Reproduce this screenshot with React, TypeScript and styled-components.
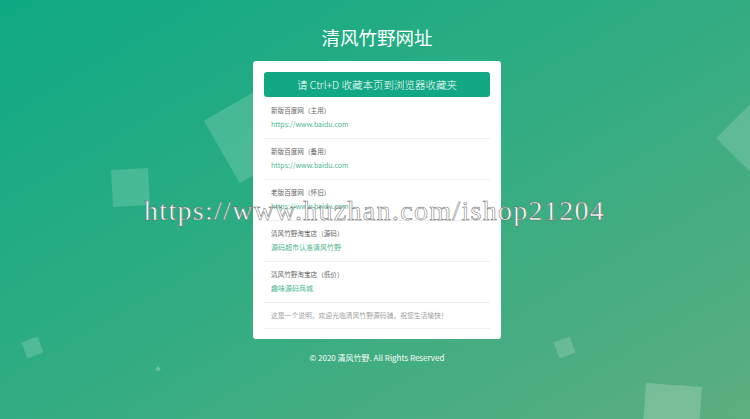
import React from "react";
import styled, { createGlobalStyle } from "styled-components";

const Global = createGlobalStyle`
  html, body { margin: 0; padding: 0; }
  body {
    width: 750px;
    height: 419px;
    overflow: hidden;
    font-family: "Noto Sans CJK SC", "Noto Sans", sans-serif;
  }
`;

const Page = styled.div`
  position: relative;
  width: 750px;
  height: 419px;
  overflow: hidden;
  background: linear-gradient(150deg, #0ea982 0%, #2aac83 40%, #5cae7f 100%);
  display: flex;
  flex-direction: column;
  align-items: center;
  padding: 24px 0 0 4px;
  box-sizing: border-box;
`;

const Square = styled.div<{ $x: number; $y: number; $s: number; $r: number; $o?: number }>`
  position: absolute;
  left: ${(p) => p.$x - p.$s / 2}px;
  top: ${(p) => p.$y - p.$s / 2}px;
  width: ${(p) => p.$s}px;
  height: ${(p) => p.$s}px;
  background: rgba(255, 255, 255, ${(p) => p.$o ?? 0.17});
  transform: rotate(${(p) => p.$r}deg);
  z-index: 0;
`;

const Title = styled.h1`
  position: relative;
  z-index: 1;
  margin: 0;
  font-size: 18.5px;
  line-height: 26px;
  font-weight: 400;
  color: #fff;
`;

const Card = styled.div`
  position: relative;
  z-index: 1;
  margin-top: 11px;
  width: 248px;
  box-sizing: border-box;
  background: #fff;
  border-radius: 3px;
  padding: 11px 11px 10px;
`;

const Button = styled.div`
  height: 25px;
  border-radius: 3px;
  background: #12a883;
  color: #fff;
  font-size: 10.5px;
  font-weight: 300;
  display: flex;
  align-items: center;
  justify-content: center;
`;

const List = styled.div`
  margin-top: 1px;
  display: flex;
  flex-direction: column;
`;

const Item = styled.div`
  padding: 7px 7px 9px;
  border-bottom: 1px solid #eeeeee;
  display: flex;
  flex-direction: column;
  gap: 4px;
`;

const Label = styled.div`
  font-size: 6.6px;
  line-height: 10px;
  color: #666;
`;

const Link = styled.a`
  font-size: 7px;
  line-height: 10px;
  color: #4db690;
  text-decoration: none;
`;

const Desc = styled.div`
  padding: 7px 7px 8px;
  border-bottom: 1px solid #eeeeee;
  font-size: 6.8px;
  line-height: 10px;
  color: #a0a0a0;
`;

const Footer = styled.div`
  position: relative;
  z-index: 1;
  margin-top: 13px;
  font-size: 8px;
  line-height: 12px;
  color: #fff;
`;

const Watermark = styled.div`
  position: absolute;
  z-index: 5;
  left: 144px;
  top: 197px;
  font-family: "Liberation Serif", serif;
  font-size: 28px;
  line-height: 28px;
  letter-spacing: 1.3px;
  color: #fff;
  -webkit-text-stroke: 0.5px #6a6a6a;
  white-space: nowrap;
  pointer-events: none;
`;

const items = [
  { label: "新版百度网（主用）", url: "https://www.baidu.com" },
  { label: "新版百度网（备用）", url: "https://www.baidu.com" },
  { label: "老版百度网（怀旧）", url: "https://www.baidu.com" },
  { label: "清风竹野淘宝店（源码）", url: "源码超市认准清风竹野" },
  { label: "清风竹野淘宝店（低价）", url: "趣味源码商城" },
];

export default function App() {
  return (
    <>
      <Global />
      <Page>
        <Square $x={130} $y={187} $s={37} $r={-3} />
        <Square $x={253} $y={134} $s={72} $r={-30} />
        <Square $x={32} $y={347} $s={17} $r={-20} />
        <Square $x={158} $y={369} $s={4} $r={45} $o={0.25} />
        <Square $x={564} $y={347} $s={17} $r={-20} />
        <Square $x={760} $y={138} $s={62} $r={45} />
        <Square $x={672} $y={413} $s={56} $r={4} $o={0.2} />
        <Title>清风竹野网址</Title>
        <Card>
          <Button>请 Ctrl+D 收藏本页到浏览器收藏夹</Button>
          <List>
            {items.map((it, i) => (
              <Item key={i}>
                <Label>{it.label}</Label>
                <Link href="#">{it.url}</Link>
              </Item>
            ))}
            <Desc>这是一个说明，欢迎光临清风竹野源码铺，祝您生活愉快！</Desc>
          </List>
        </Card>
        <Footer>© 2020 清风竹野. All Rights Reserved</Footer>
        <Watermark>https://www.huzhan.com/ishop21204</Watermark>
      </Page>
    </>
  );
}
